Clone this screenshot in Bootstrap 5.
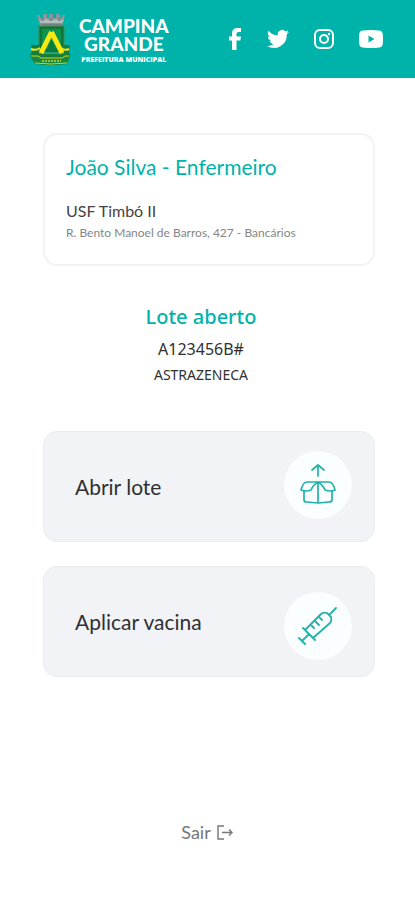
<!DOCTYPE html>
<html lang="pt-BR">
<head>
<meta charset="utf-8">
<meta name="viewport" content="width=device-width, initial-scale=1">
<title>Campina Grande - Vacinação</title>
<link href="https://cdn.jsdelivr.net/npm/bootstrap@5.3.0/dist/css/bootstrap.min.css" rel="stylesheet">
<style>
:root { --teal: #00b3aa; }
body { font-family: Lato, "Liberation Sans", sans-serif; color: #303033; background: #fff; }
.topbar { background: var(--teal); min-height: 78px; padding: 0 32px 0 29px; }
.brand-name { font-size: 19px; line-height: 18px; font-weight: 900; text-align: center; }
.brand-sub { font: 800 7px/10px "Open Sans", sans-serif; text-align: center; margin-top: 2px; }
.brand-text { padding-top: 4px; }
.socials { gap: 25px; }
.page { padding: 55px 40px 40px 43px; }
.panel { border: 2px solid #f2f3f4; border-radius: 14px; padding: 18px 21px; min-height: 133px; }
.person { font-size: 21px; line-height: 28px; color: var(--teal); }
.unit { font-size: 16px; line-height: 22px; margin-top: 19px; color: #444; }
.address { font-size: 12px; line-height: 22px; color: #858585; }
.batch { margin-top: 35px; padding-right: 16px; font-family: "Noto Sans", sans-serif; color: #303030; }
.batch-title { font-size: 20px; line-height: 32px; font-weight: 500; color: var(--teal); }
.batch-code { font-size: 16px; line-height: 32px; }
.batch-maker { font-size: 14px; line-height: 20px; }
.actions { gap: 24px; margin-top: 46px; }
.action { min-height: 111px; background: #f1f3f7; border: 1px solid #eaedf0; border-radius: 14px; color: #303033; font-size: 21px; padding: 0 22px 0 31px; }
.action:hover { background: #e9edf2; }
.disc { width: 68px; height: 68px; background: #fbfefe; color: #1fb3aa; }
.exit { margin-top: 141px; margin-right: 4px; font-size: 18px; line-height: 28px; color: #777; gap: 6px; }
</style>
</head>
<body>
<header class="topbar d-flex align-items-center justify-content-between text-white">
  <a href="#" class="d-flex align-items-center text-white text-decoration-none gap-2" aria-label="Campina Grande Prefeitura Municipal">
    <svg width="42" height="52" viewBox="0 0 42 52" aria-hidden="true">
      <path d="M8 2h3v3h3V1h4v4h2V1h4v4h3V1h4v4h2V2h3l-3 11H11z" fill="#8a9699"/>
      <path d="M10 6l3 2 4-2 5 2 5-2 4 2 4-2-2 5H12z" fill="#b4bdbd"/>
      <path d="M12 11h21" stroke="#5c696c"/>
      <path d="M14 5v3m8-3v3m8-3v3" stroke="#68777b"/>
      <path d="M10 13h25v26H10z" fill="#12733a" stroke="#3c8c47"/>
      <path d="M13 16h19v20H13z" fill="#0b944d"/>
      <path d="M2 32h8v9h25v-9h6l-1 6 1 5-3 8q-16 2-32 0l-5-8 2-5z" fill="#177e3a"/>
      <path d="M2 36q5 2 9-1M40 36q-4 2-8-1" fill="none" stroke="#f0e520" stroke-width="2"/>
      <path d="M22.500 19L33 40M22.500 19L12 40" stroke="#f8e914" stroke-width="5"/>
      <path d="M17 39h11l-5.500-12z" fill="#087b3d"/>
      <path d="M1 43h8l3 2h21l3-2h5l-3 7q-16 2-32 0z" fill="#168842"/>
      <path d="M2 43h7l3 2h21l3-2h4M6 50q16 2 32 0" fill="none" stroke="#c9d629"/>
      <path d="M13 48h19" stroke="#c8d73b" stroke-width="1.500" stroke-dasharray="2 1"/>
    </svg>
    <span class="brand-text d-block">
      <span class="brand-name d-block"><span class="d-block">CAMPINA</span><span class="d-block">GRANDE</span></span>
      <span class="brand-sub d-block">PREFEITURA MUNICIPAL</span>
    </span>
  </a>
  <nav class="socials d-flex align-items-center" aria-label="Redes sociais">
    <a href="#" class="d-flex text-white" aria-label="Facebook"><svg width="14" height="22" viewBox="0 0 14 22" fill="currentColor"><path d="M4 22V12.500H1V8.500h3V6C4 2 6 0 9.500 0H13v4h-2C9 4 8.500 4.700 8.500 6v2.500H13l-.7 4H8.500V22z"/></svg></a>
    <a href="#" class="d-flex text-white" aria-label="Twitter"><svg width="22" height="20" viewBox="0 0 24 20" fill="currentColor"><path d="M24 2.400a10 10 0 0 1-2.800.8A5 5 0 0 0 23.300.5a10 10 0 0 1-3.100 1.200 4.900 4.900 0 0 0-8.400 4.500A14 14 0 0 1 1.700 1a5 5 0 0 0 1.500 6.600A5 5 0 0 1 1 7a5 5 0 0 0 3.900 4.900 5 5 0 0 1-2.200.1 5 5 0 0 0 4.600 3.400A10 10 0 0 1 0 17.500 14 14 0 0 0 21.500 5 10 10 0 0 0 24 2.400z"/></svg></a>
    <a href="#" class="d-flex text-white" aria-label="Instagram"><svg width="20" height="20" viewBox="0 0 20 20" fill="none" stroke="currentColor" stroke-width="2"><rect x="1" y="1" width="18" height="18" rx="5"/><circle cx="10" cy="10" r="4"/><circle cx="15" cy="5" r="1.200" fill="currentColor" stroke="none"/></svg></a>
    <a href="#" class="d-flex text-white" aria-label="YouTube"><svg width="24" height="18" viewBox="0 0 24 18"><path fill="currentColor" fill-rule="evenodd" d="M4 .5Q12-.5 20 .5q3.500.2 3.800 4 .4 4.500 0 9-.3 3.800-3.800 4-8 1-16 0-3.500-.2-3.800-4-.4-4.500 0-9Q.5.700 4 .5zM9.500 5.500v7l6-3.500z"/></svg></a>
  </nav>
</header>
<main class="page">
  <section class="panel">
    <h1 class="person fw-normal mb-0">João Silva - Enfermeiro</h1>
    <p class="unit mb-0">USF Timbó II</p>
    <p class="address mb-0">R. Bento Manoel de Barros, 427 - Bancários</p>
  </section>
  <section class="batch text-center">
    <h2 class="batch-title mb-0">Lote aberto</h2>
    <p class="batch-code mb-0">A123456B#</p>
    <p class="batch-maker mb-0">ASTRAZENECA</p>
  </section>
  <div class="actions d-flex flex-column">
    <button type="button" class="action d-flex align-items-center justify-content-between w-100">
      <span>Abrir lote</span>
      <span class="disc rounded-circle d-flex align-items-center justify-content-center mb-1">
        <svg width="38" height="42" viewBox="0 0 38 42" fill="none" stroke="currentColor" stroke-width="1.700" stroke-linejoin="round" stroke-linecap="round" aria-hidden="true"><path d="M19 12V1m-6 5l6-5 6 5M19 18H8Q4 18 2 26q5 2 10 0 2-5 7-8h11q4 0 6 8-5 2-10 0-2-5-7-8v21M5 27v9q0 2 3 2l11 1 11-1q3 0 3-2v-9"/></svg>
      </span>
    </button>
    <button type="button" class="action d-flex align-items-center justify-content-between w-100">
      <span>Aplicar vacina</span>
      <span class="disc rounded-circle d-flex align-items-center justify-content-center mt-2">
        <svg width="40" height="40" viewBox="0 0 40 40" fill="none" stroke="currentColor" stroke-width="1.800" stroke-linejoin="round" stroke-linecap="round" aria-hidden="true"><path d="M38 2l-7 7M5 22l12 12M1 32l6 6M4 35l7-7M7 24L23 8q3-2 6-1l4 4q1 4-1 6L15 32M13 19l3 3m1-7l4 4m0-8l3 3"/></svg>
      </span>
    </button>
  </div>
  <div class="text-center">
    <a href="#" class="exit d-inline-flex align-items-center text-decoration-none">Sair
      <svg width="16" height="15" viewBox="0 0 16 15" fill="none" stroke="currentColor" stroke-width="1.400" aria-hidden="true"><path d="M7 1H1v13h6M5 7.500h10M12 4.500l3 3-3 3"/></svg>
    </a>
  </div>
</main>
<script src="https://cdn.jsdelivr.net/npm/bootstrap@5.3.0/dist/js/bootstrap.bundle.min.js"></script>
</body>
</html>
